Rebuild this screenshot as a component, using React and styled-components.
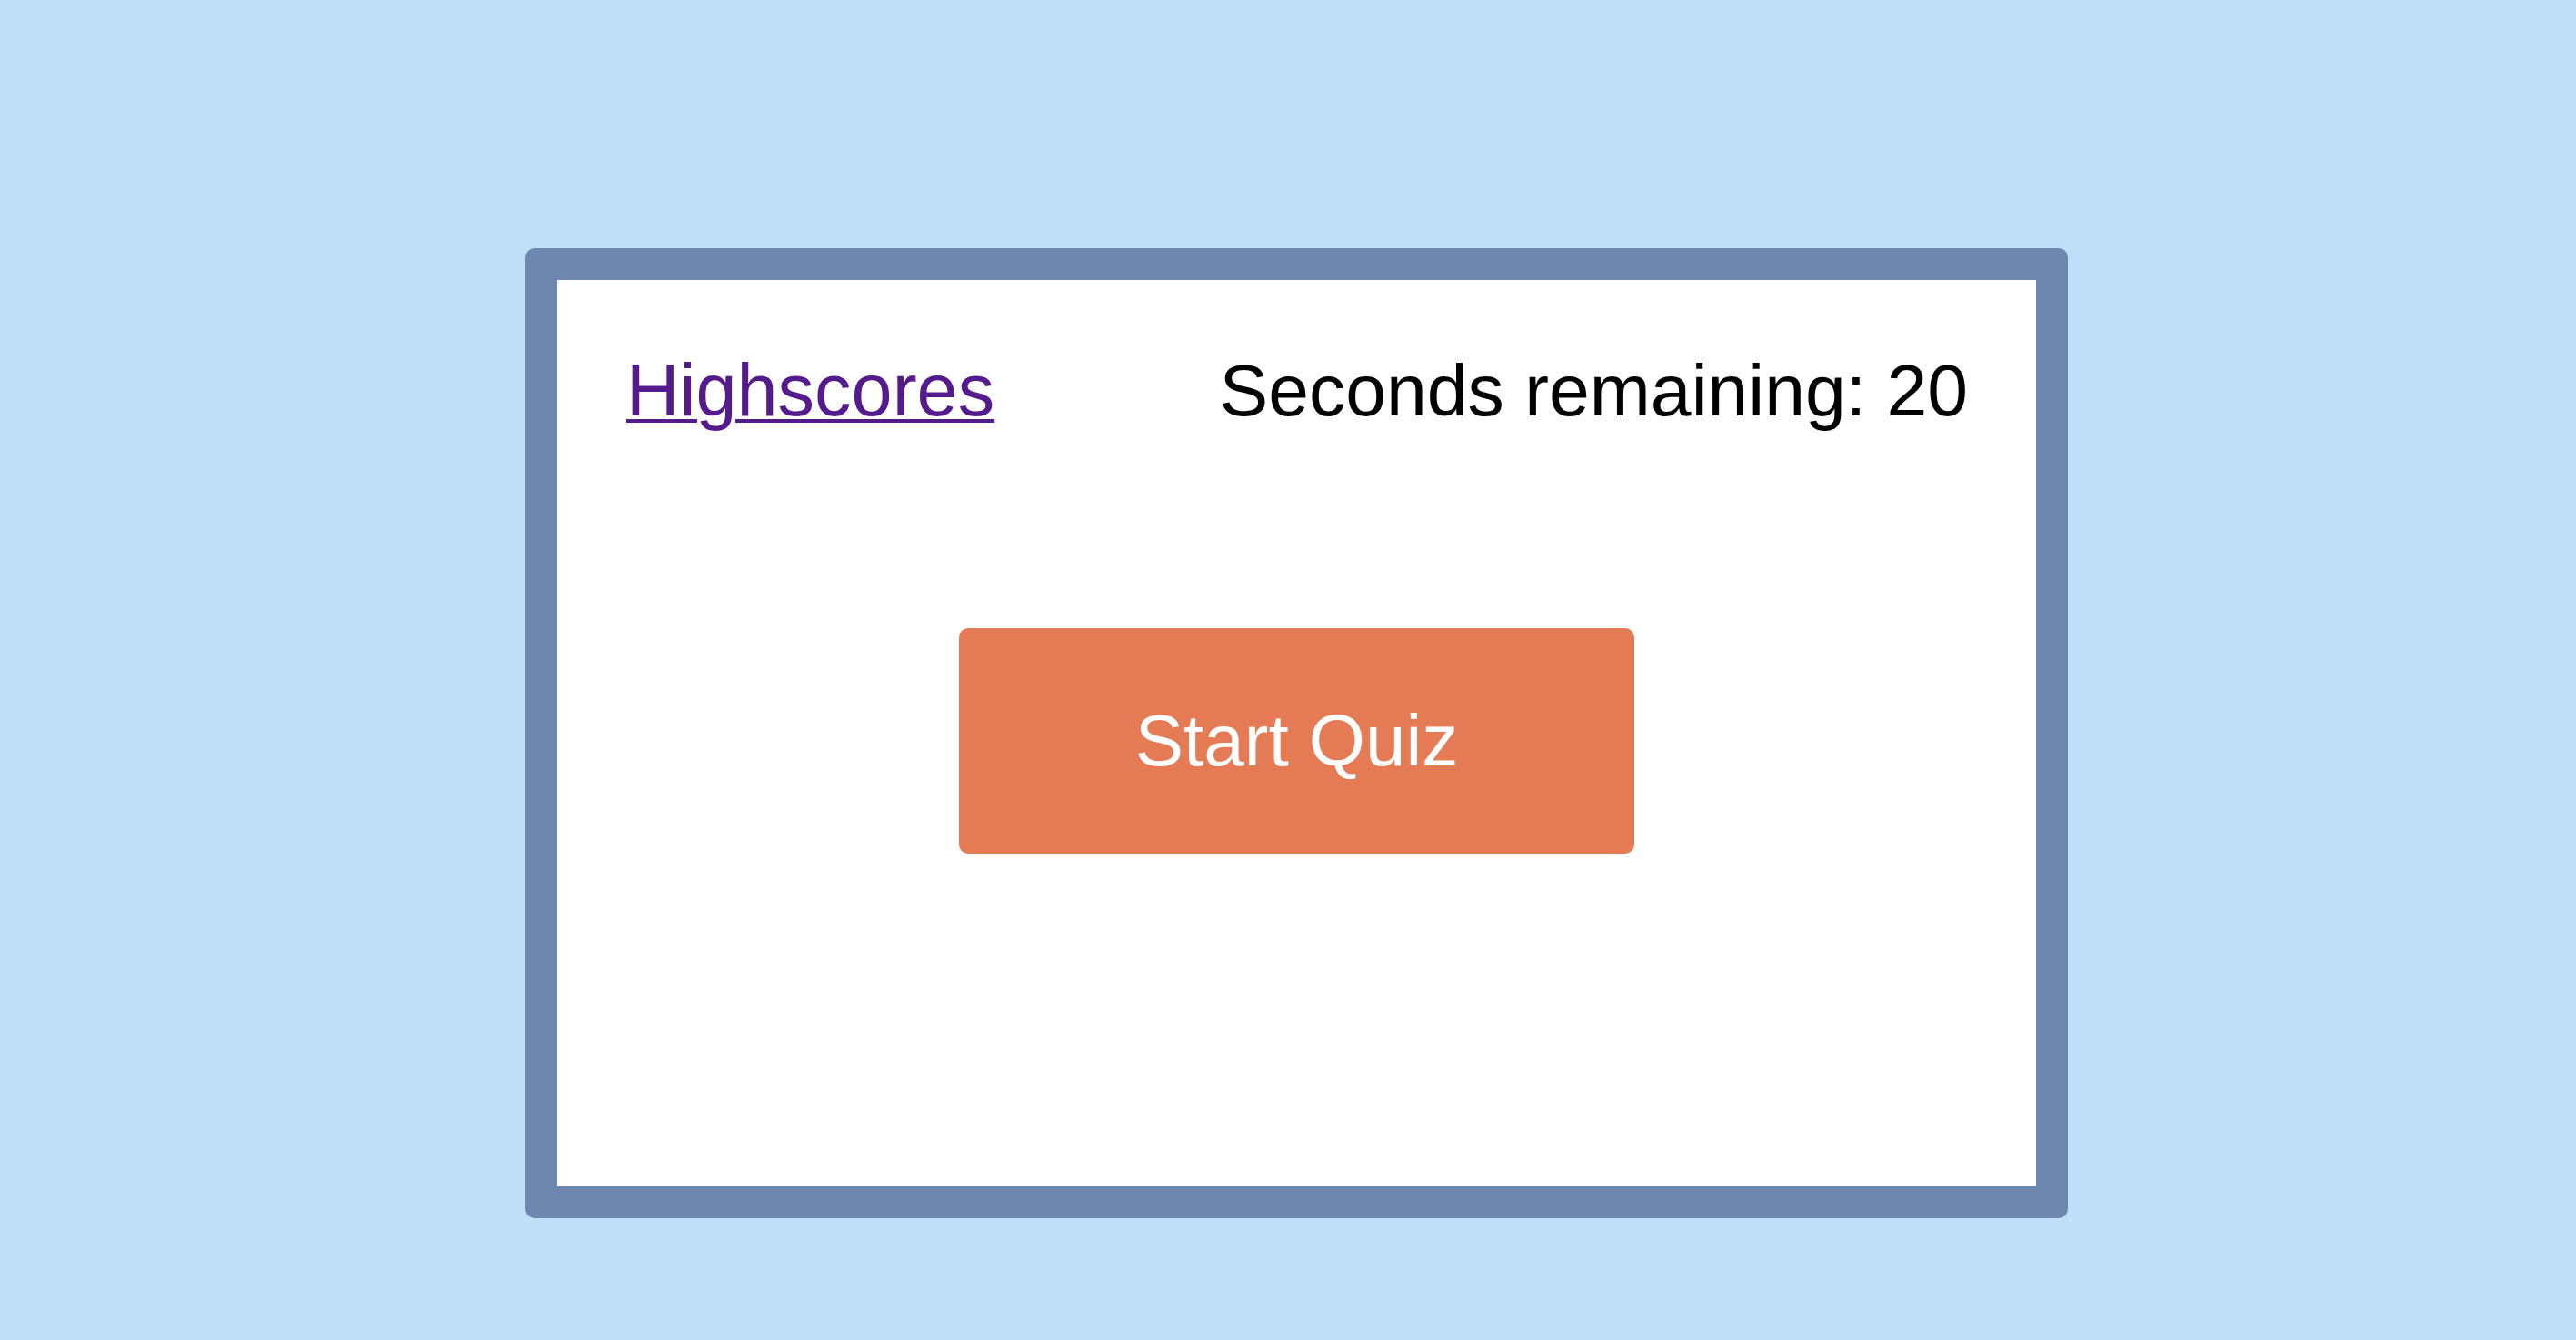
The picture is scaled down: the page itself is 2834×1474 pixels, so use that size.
import React from 'react';
import styled, { createGlobalStyle } from 'styled-components';

const GlobalStyle = createGlobalStyle`
  html, body {
    margin: 0;
    padding: 0;
    background-color: #c0dff8;
  }
  body {
    font-family: "Liberation Sans", Arial, sans-serif;
  }
`;

const App = () => (
  <Page>
    <GlobalStyle />
    <QuizCard>
      <CardHeader>
        <HighscoresLink href="#highscores">Highscores</HighscoresLink>
        <Timer>Seconds remaining: 20</Timer>
      </CardHeader>
      <CardBody>
        <StartButton type="button">Start Quiz</StartButton>
      </CardBody>
    </QuizCard>
  </Page>
);

export default App;

const Page = styled.div`
  display: flex;
  justify-content: center;
  min-height: 1474px;
  box-sizing: border-box;
  padding: 273px 0 0 19px;
  background-color: #c0dff8;
`;

const QuizCard = styled.div`
  display: flex;
  flex-direction: column;
  box-sizing: border-box;
  width: 1697px;
  height: 1067px;
  border: 35px solid #6e87ae;
  border-radius: 10px;
  background-color: #ffffff;
`;

const CardHeader = styled.div`
  display: flex;
  flex-direction: row;
  align-items: baseline;
  justify-content: space-between;
  padding: 75px 75px 0 76px;
`;

const HighscoresLink = styled.a`
  font-size: 81px;
  color: #551a8b;
  text-decoration: underline;
  text-decoration-thickness: 4px;
  text-underline-offset: 4px;
`;

const Timer = styled.span`
  font-size: 80.5px;
  color: #000000;
`;

const CardBody = styled.div`
  display: flex;
  justify-content: center;
  padding-top: 215px;
`;

const StartButton = styled.button`
  width: 743px;
  height: 248px;
  border: none;
  border-radius: 10px;
  background-color: #e57b55;
  color: #ffffff;
  font-family: "Liberation Sans", Arial, sans-serif;
  font-size: 80px;
  cursor: pointer;
`;
